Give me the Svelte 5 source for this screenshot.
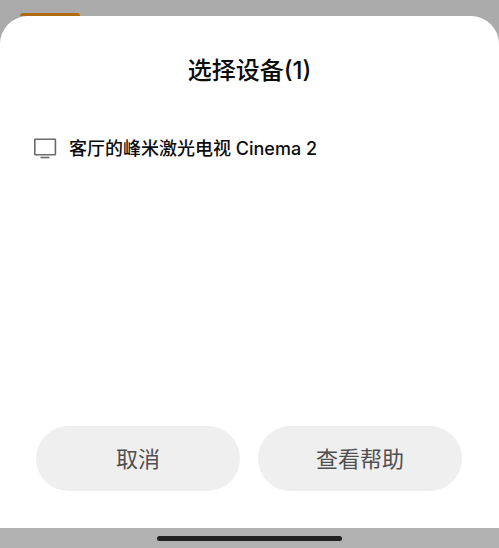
<script lang="ts">
	type Device = { id: number; name: string };

	let devices: Device[] = $state([{ id: 1, name: "客厅的峰米激光电视 Cinema 2" }]);
	let selected: number | null = $state(null);
	let open = $state(true);

	function choose(id: number) {
		selected = id;
	}

	function cancel() {
		open = false;
	}
</script>

<div class="screen">
	<div class="backdrop">
		<div class="card-edge"></div>
	</div>
	{#if open}
		<main class="sheet" role="dialog" aria-labelledby="sheet-title">
			<h1 id="sheet-title">选择设备({devices.length})</h1>
			<ul class="devices">
				{#each devices as device (device.id)}
					<li>
						<button
							class="device"
							aria-pressed={selected === device.id}
							onclick={() => choose(device.id)}
						>
							<svg width="24" height="22" viewBox="0 0 24 22" aria-hidden="true">
								<rect x="1.8" y="1.2" width="20.6" height="15.6" rx="0.5" />
								<path d="M7.5 19.5h9" />
							</svg>
							<span>{device.name}</span>
						</button>
					</li>
				{/each}
			</ul>
			<div class="actions">
				<button class="action" onclick={cancel}>取消</button>
				<button class="action">查看帮助</button>
			</div>
		</main>
	{/if}
	<footer class="nav-bar">
		<div class="home-indicator"></div>
	</footer>
</div>

<style>
	:global(body) {
		margin: 0;
		background-color: #ababab;
	}

	.screen {
		display: flex;
		flex-direction: column;
		min-height: 100vh;
		font-family: Inter, "Noto Sans CJK SC", sans-serif;
		color: #0c0c0c;
	}

	.backdrop {
		display: flex;
		align-items: flex-end;
		height: 16px;
		padding: 0 20px;
	}

	/* Top of the card that the sheet covers */
	.card-edge {
		width: 60px;
		height: 3px;
		border-radius: 3px 3px 0 0;
		background-color: #b26c10;
	}

	.sheet {
		display: flex;
		flex: 1;
		flex-direction: column;
		border-radius: 28px 28px 0 0;
		background-color: #fff;
	}

	h1 {
		margin: 37px 0 0;
		font-size: 24px;
		font-weight: 500;
		line-height: 36px;
		text-align: center;
	}

	button {
		border: none;
		margin: 0;
		font-family: inherit;
		cursor: pointer;
	}

	.devices {
		flex: 1;
		list-style: none;
		margin: 36px 0 0;
		padding: 0;
	}

	.device {
		display: flex;
		align-items: center;
		gap: 12px;
		width: 100%;
		padding: 12px 33px;
		background-color: transparent;
		color: inherit;
		font-size: 18px;
		font-weight: 500;
		line-height: 24px;
		text-align: left;
	}

	.device svg {
		flex: none;
		fill: none;
		stroke: #6a6a6a;
		stroke-width: 1.6;
	}

	.actions {
		display: flex;
		gap: 18px;
		padding: 24px 37px 37px 36px;
	}

	.action {
		flex: 1;
		height: 65px;
		padding: 0;
		border-radius: 33px;
		background-color: #efefef;
		color: #505050;
		font-size: 22px;
		font-weight: 400;
		line-height: 32px;
	}

	.nav-bar {
		display: flex;
		align-items: center;
		justify-content: center;
		height: 20px;
		background-color: #b1b1b1;
	}

	.home-indicator {
		width: 37%;
		height: 5px;
		border-radius: 3px;
		background-color: #202020;
	}
</style>
